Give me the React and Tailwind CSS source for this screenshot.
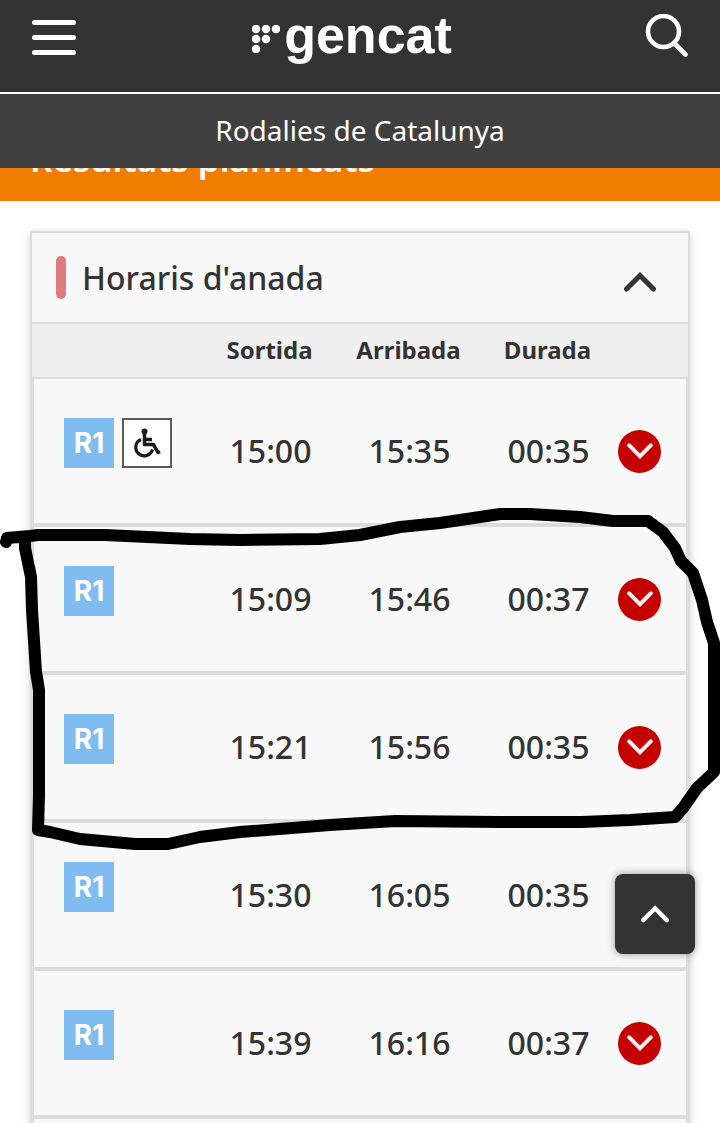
import { useState } from "react";

const trains = [
  { line: "R1", accessible: true, departure: "15:00", arrival: "15:35", duration: "00:35" },
  { line: "R1", accessible: false, departure: "15:09", arrival: "15:46", duration: "00:37" },
  { line: "R1", accessible: false, departure: "15:21", arrival: "15:56", duration: "00:35" },
  { line: "R1", accessible: false, departure: "15:30", arrival: "16:05", duration: "00:35" },
  { line: "R1", accessible: false, departure: "15:39", arrival: "16:16", duration: "00:37" },
];

function Chevron({ up = false, className }) {
  return (
    <svg viewBox="0 0 32 20" fill="none" stroke="currentColor" strokeWidth="5" strokeLinecap="round" className={className}>
      <path d={up ? "M2.5 17 16 3.5 29.5 17" : "M2.5 3 16 16.5 29.5 3"} />
    </svg>
  );
}

function GencatLogo() {
  const dots = [[4, 4], [14, 4], [24, 4], [4, 14], [14, 14], [4, 24]];
  return (
    <a href="#inici" className="flex items-center gap-1 text-white">
      <svg viewBox="0 0 28 28" className="mt-2 h-7 w-7" fill="currentColor">
        {dots.map(([x, y]) => (
          <circle key={`${x}-${y}`} cx={x} cy={y} r="4.3" />
        ))}
      </svg>
      <span className="font-['Liberation_Sans',sans-serif] text-[52px] leading-[60px] font-bold">gencat</span>
    </a>
  );
}

function WheelchairIcon() {
  return (
    <svg viewBox="0 0 50 50" className="h-[50px] w-[50px]" fill="none" role="img" aria-label="Accessible">
      <rect x="1" y="1" width="48" height="48" fill="#fff" stroke="#5a5a5a" strokeWidth="2" />
      <circle cx="22.5" cy="13.5" r="3" fill="#1a1a1a" />
      <path d="M22.5 16v10.5h9l4.5 8 2-1M23 21.5h7" stroke="#1a1a1a" strokeWidth="3.5" strokeLinejoin="round" />
      <path d="M19 21.5a8.5 8.5 0 1 0 11.5 10" stroke="#1a1a1a" strokeWidth="3.2" />
    </svg>
  );
}

function TrainRow({ train }) {
  return (
    <tr className="h-[148px] text-[32px] leading-10 font-medium">
      <td className="border-y-2 border-l-2 border-[#dcdcdc] pl-[30px] pb-4">
        <div className="flex gap-2">
          <span className="flex h-[50px] w-[50px] items-center justify-center bg-[#7fbcef] font-[Inter,sans-serif] text-[28px] font-bold text-white">
            {train.line}
          </span>
          {train.accessible && <WheelchairIcon />}
        </div>
      </td>
      <td className="border-y-2 border-[#dcdcdc] text-center">{train.departure}</td>
      <td className="border-y-2 border-[#dcdcdc] text-center">{train.arrival}</td>
      <td className="border-y-2 border-[#dcdcdc] text-center">{train.duration}</td>
      <td className="border-y-2 border-r-2 border-[#dcdcdc] pr-[25px]">
        <button
          aria-label={`Detall ${train.departure}`}
          className="ml-auto flex h-[43px] w-[43px] items-center justify-center rounded-full bg-[#c40000] text-[#fff0f0]"
        >
          <Chevron className="h-4 w-[26px]" />
        </button>
      </td>
    </tr>
  );
}

export default function App() {
  const [open, setOpen] = useState(true);

  return (
    <div className="relative h-screen overflow-hidden bg-white font-['Noto_Sans',sans-serif] text-[#333]">
      <header className="relative z-10 text-white">
        <div className="flex h-[94px] items-start justify-between border-b-2 border-white bg-[#333] px-8">
          <button aria-label="Menú" className="mt-5 flex w-11 flex-col gap-[10px]">
            <span className="h-[5px] w-full rounded-full bg-white" />
            <span className="h-[5px] w-full rounded-full bg-white" />
            <span className="h-[5px] w-full rounded-full bg-white" />
          </button>
          <div className="mt-[5px] mr-4">
            <GencatLogo />
          </div>
          <button aria-label="Cerca" className="mt-[14px] flex w-11 justify-end">
            <svg viewBox="0 0 44 44" className="h-11 w-11" fill="none" stroke="currentColor" strokeWidth="4.6" strokeLinecap="round">
              <circle cx="19.5" cy="17.5" r="15.5" />
              <path d="M30.5 29.5 41.5 40.5" />
            </svg>
          </button>
        </div>
        <div className="flex h-[74px] items-center justify-center bg-[#404040] pb-0.5">
          <p className="text-[28px] leading-9">Rodalies de Catalunya</p>
        </div>
      </header>

      <main>
        {/* title bar is partly scrolled under the header */}
        <div className="-mt-[51px] flex h-[84px] items-center bg-[#f07d00] px-[30px]">
          <h1 className="text-[35px] leading-[46px] font-semibold text-white">Resultats planificats</h1>
        </div>

        <section className="mx-[30px] mt-[30px] border-2 border-[#dcdcdc] bg-[#f8f8f8] shadow-[0_2px_8px_rgba(0,0,0,0.2)]">
          <div className="flex h-[91px] items-center justify-between border-b-2 border-[#dcdcdc] pr-8 pl-6">
            <div className="flex items-center gap-4">
              <span className="h-[43px] w-[10px] rounded-full bg-[#de7b7d]" />
              <h2 className="text-[32px] leading-[44px] font-medium">Horaris d'anada</h2>
            </div>
            <button aria-label="Plega" aria-expanded={open} onClick={() => setOpen(!open)} className="mt-2">
              <Chevron up={open} className="h-5 w-8" />
            </button>
          </div>

          {open && (
            <table className="w-full table-fixed border-separate border-spacing-0">
              <thead>
                <tr className="h-[53px] bg-[#f0f0f0] text-[24px] leading-8">
                  <th aria-label="Línia" />
                  <th className="w-[139px] pr-0.5 pb-0.5 font-bold">Sortida</th>
                  <th className="w-[139px] pr-0.5 pb-0.5 font-bold">Arribada</th>
                  <th className="w-[139px] pr-0.5 pb-0.5 font-bold">Durada</th>
                  <th className="w-[70px]" aria-label="Detall" />
                </tr>
              </thead>
              <tbody>
                {trains.map((train) => (
                  <TrainRow key={train.departure} train={train} />
                ))}
                <tr className="h-[148px]">
                  <td colSpan={5} className="border-2 border-[#dcdcdc]" />
                </tr>
              </tbody>
            </table>
          )}
        </section>
      </main>

      <button
        aria-label="Torna a dalt"
        className="absolute top-[874px] right-[25px] z-10 flex h-20 w-20 items-center justify-center rounded-lg bg-[#333] text-white shadow-[0_0_8px_rgba(0,0,0,0.4)]"
      >
        <Chevron up className="h-[18px] w-7" />
      </button>

      {/* freehand marker round the chosen trains */}
      <svg
        viewBox="0 0 720 1123"
        className="pointer-events-none absolute top-0 left-0 w-full"
        fill="none"
        stroke="#000"
        strokeWidth="12"
        strokeLinecap="round"
        strokeLinejoin="round"
      >
        <path d="M6 542 7 538 30 536 38 535H105L190 539 240 540 320 539 360 535 400 527 440 523 500 514 530 514 580 517 613 521H648L663 532 675 548 681 561 693 573 702 600 707 622 714 643V772L697 788 683 808 675 817 630 820 582 822H500L395 821 330 825 240 832 200 837 168 844H135L80 839 50 832 38 830 39 795V690L36 672 32 610 31 577 25 548V538" />
      </svg>
    </div>
  );
}
